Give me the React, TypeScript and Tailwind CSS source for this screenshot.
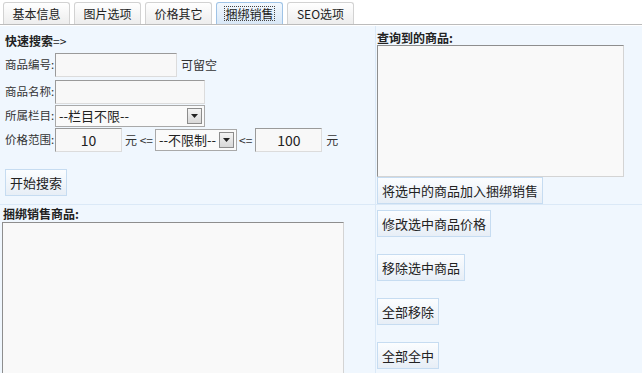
import React from "react";

const font = { fontFamily: '"Noto Sans CJK SC", "Liberation Sans", sans-serif' };

const tabs = ["基本信息", "图片选项", "价格其它", "捆绑销售", "SEO选项"];

function Tab({ label, active }: { label: string; active?: boolean }) {
  return (
    <div
      className={
        "flex h-[22px] w-[67px] items-center justify-center rounded-t-[3px] border border-b-0 text-[12px] text-[#222] " +
        (active
          ? "border-[#9fc3e6] bg-gradient-to-b from-[#f2f8fe] to-[#d9e8f7]"
          : "border-[#d2d2d2] bg-gradient-to-b from-white to-[#ededed]")
      }
    >
      <span className={active ? "outline outline-1 outline-dotted outline-[#444] leading-[13px]" : ""}>{label}</span>
    </div>
  );
}

function Input({ w, value }: { w: string; value?: string }) {
  return (
    <div
      className={`${w} flex h-[24px] shrink-0 items-center justify-center border border-t-[#9a9a9a] border-l-[#9a9a9a] border-r-[#dcdcdc] border-b-[#dcdcdc] bg-[#f8f8f8] text-[14px] text-[#222]`}
    >
      {value}
    </div>
  );
}

function Select({ w, value }: { w: string; value: string }) {
  return (
    <div
      className={`${w} flex h-[22px] shrink-0 items-center justify-between whitespace-nowrap border border-[#a9a9a9] bg-[#fafafa] pl-[3px] pr-[2px] text-[13px] text-[#222]`}
    >
      <span>{value}</span>
      <span className="flex h-[16px] w-[15px] items-center justify-center border border-[#8c8c8c] bg-gradient-to-b from-[#f4f4f4] to-[#d8d8d8]">
        <svg width="7" height="4" viewBox="0 0 7 4">
          <path d="M0 0h7L3.5 4z" fill="#222" />
        </svg>
      </span>
    </div>
  );
}

function Btn({ label }: { label: string }) {
  return (
    <div className="inline-flex h-[27px] items-center whitespace-nowrap border border-[#c6dcf1] bg-gradient-to-b from-[#fbfdff] to-[#e7eef6] px-[4px] text-[13px] text-[#222]">
      {label}
    </div>
  );
}

function Label({ children }: { children: React.ReactNode }) {
  return <span className="w-[50px] shrink-0 whitespace-nowrap text-[11.5px] text-[#333]">{children}</span>;
}

const txt = "whitespace-nowrap text-[12px] text-[#333]";

export default function App() {
  return (
    <div className="h-[373px] w-[642px] overflow-hidden bg-white" style={font}>
      <div className="flex h-[25px] items-end gap-[4px] border-b border-[#bcbcbc] pl-[3px]">
        {tabs.map((t, i) => (
          <Tab key={t} label={t} active={i === 3} />
        ))}
      </div>
      <div className="mt-[1px] grid h-[347px] grid-cols-[376px_1fr] grid-rows-[179px_1fr] bg-[#f0f7fe]">
        <div className="border-b border-r border-[#dbe9f7] pl-[5px] pt-[8px]">
          <div className="h-[14px] text-[12px] font-bold leading-[14px] text-[#222]">
            快速搜索<span className="font-normal">=&gt;</span>
          </div>
          <div className="mt-[5px] flex items-center">
            <Label>商品编号:</Label>
            <Input w="w-[122px]" />
            <span className={`ml-[4px] ${txt}`}>可留空</span>
          </div>
          <div className="mt-[3px] flex items-center">
            <Label>商品名称:</Label>
            <Input w="w-[150px]" />
          </div>
          <div className="mt-[1px] flex items-center">
            <Label>所属栏目:</Label>
            <Select w="w-[150px]" value="--栏目不限--" />
          </div>
          <div className="mt-[1px] flex items-center">
            <Label>价格范围:</Label>
            <Input w="w-[67px]" value="10" />
            <span className={`ml-[3px] ${txt}`}>元 &lt;=</span>
            <span className="ml-[2px]">
              <Select w="w-[82px]" value="--不限制--" />
            </span>
            <span className={`ml-[2px] ${txt}`}>&lt;=</span>
            <span className="ml-[3px]">
              <Input w="w-[67px]" value="100" />
            </span>
            <span className={`ml-[4px] ${txt}`}>元</span>
          </div>
          <div className="mt-[17px]">
            <Btn label="开始搜索" />
          </div>
        </div>
        <div className="border-b border-[#dbe9f7] pl-[1px] pt-[5px]">
          <div className="h-[14px] text-[12px] font-bold leading-[14px] text-[#222]">查询到的商品:</div>
          <div className="h-[132px] w-[247px] border border-t-[#8e8e8e] border-l-[#8e8e8e] border-r-[#d4d4d4] border-b-[#d4d4d4] bg-[#f9f9f9]" />
          <Btn label="将选中的商品加入捆绑销售" />
        </div>
        <div className="overflow-hidden border-r border-[#dbe9f7] pl-[2px] pt-[1px]">
          <div className="h-[16px] pl-[1px] text-[12px] font-bold leading-[16px] text-[#222]">捆绑销售商品:</div>
          <div className="h-[160px] w-[342px] border border-t-[#8e8e8e] border-l-[#8e8e8e] border-r-[#d4d4d4] border-b-[#d4d4d4] bg-[#f9f9f9]" />
        </div>
        <div className="flex flex-col items-start gap-[17px] pl-[1px] pt-[5px]">
          <Btn label="修改选中商品价格" />
          <Btn label="移除选中商品" />
          <Btn label="全部移除" />
          <Btn label="全部全中" />
        </div>
      </div>
    </div>
  );
}
